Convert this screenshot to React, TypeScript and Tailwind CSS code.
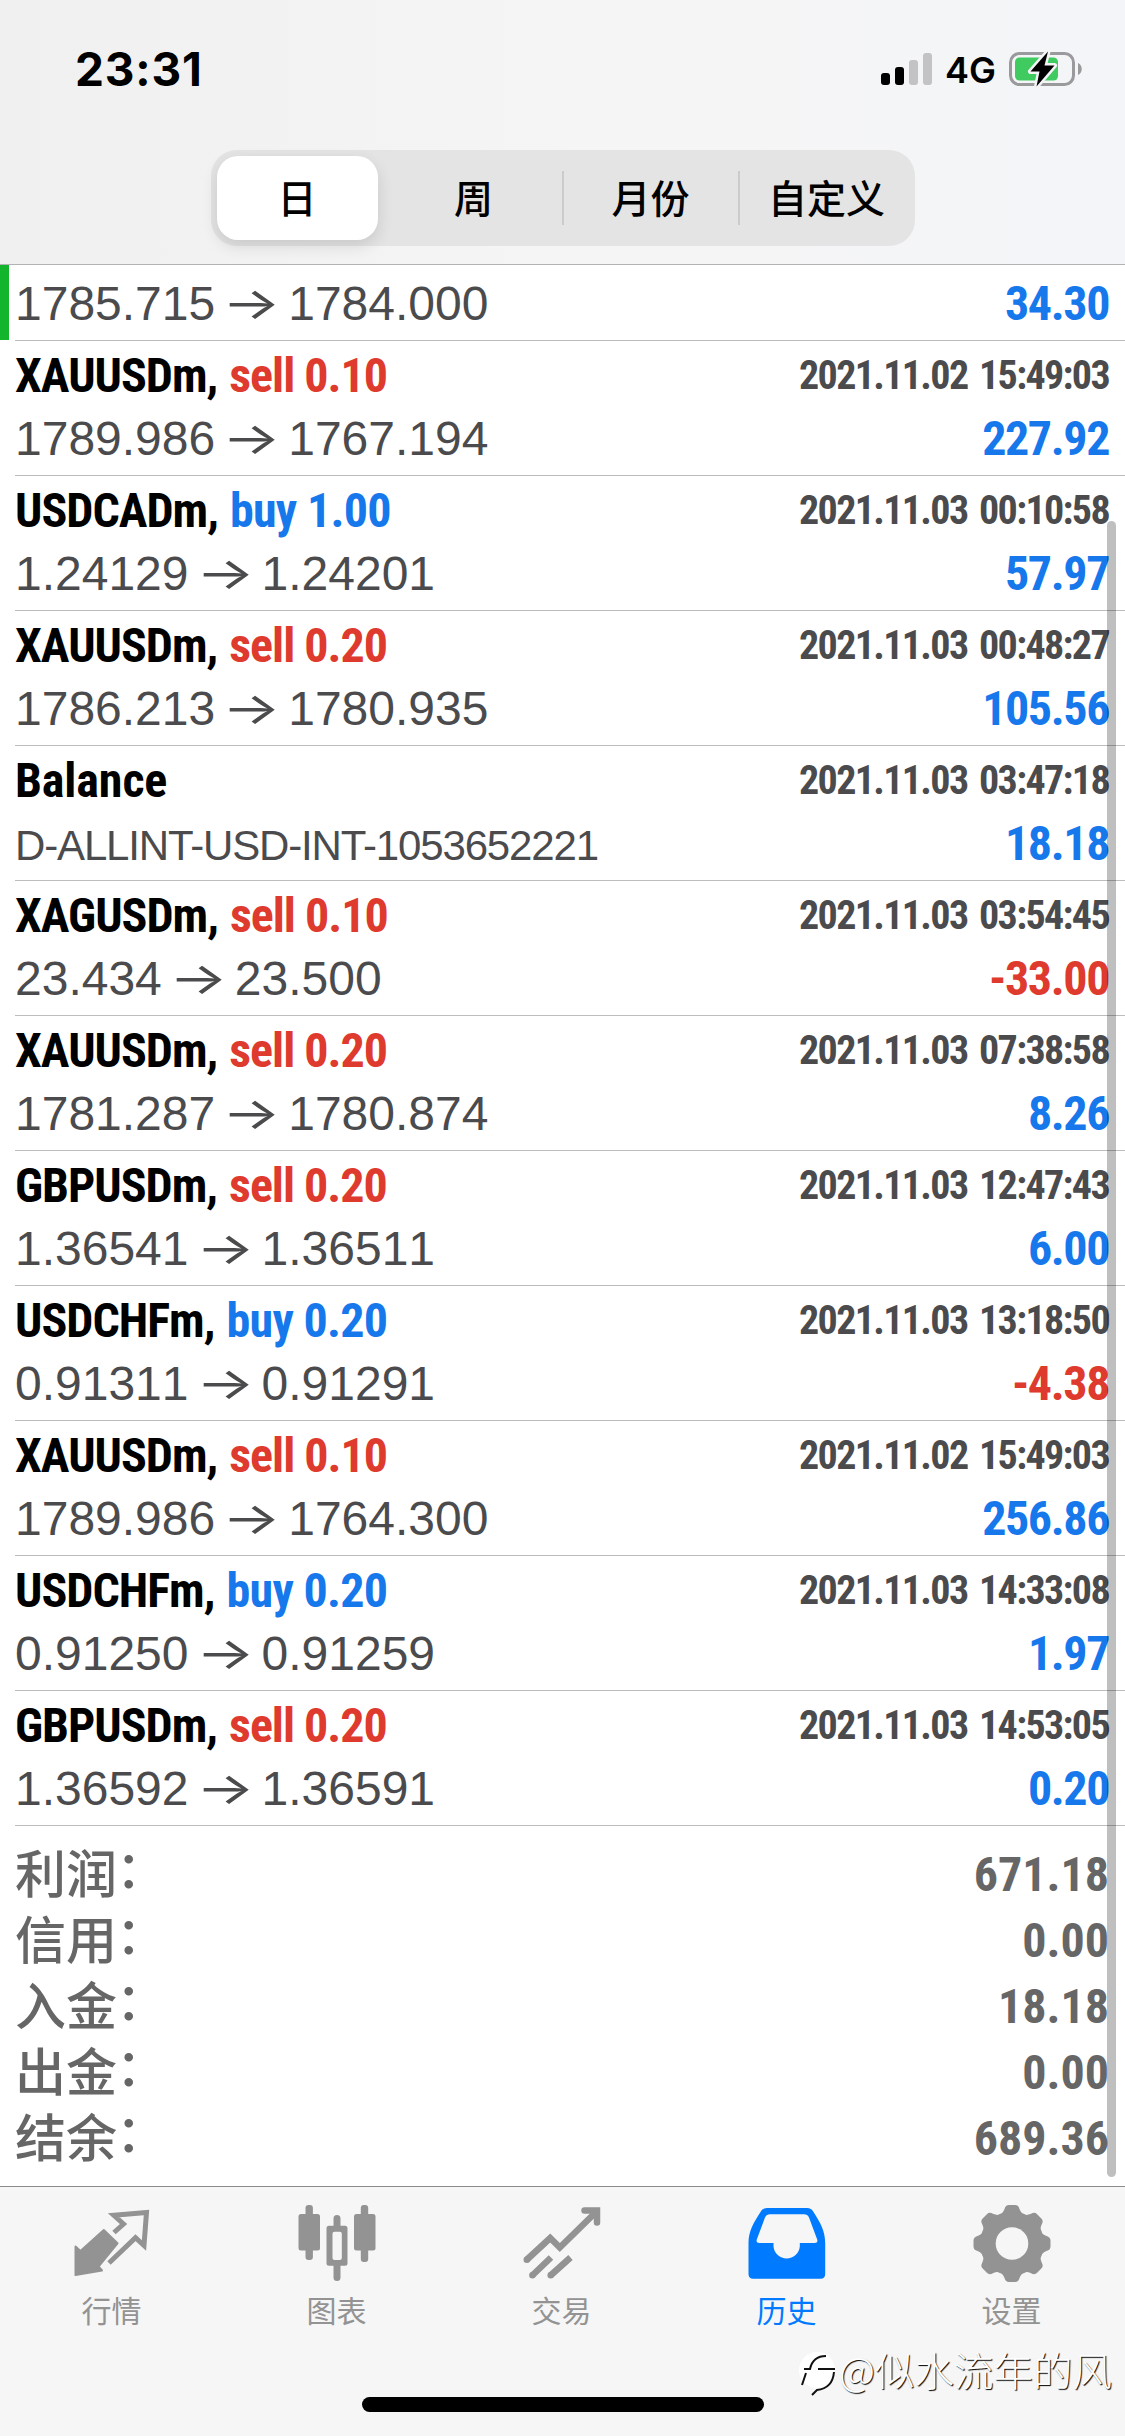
import type { ReactNode } from "react";
import clsx from "clsx";

interface Deal {
  symbol: string;
  side?: "buy" | "sell";
  volume?: string;
  open?: string;
  close?: string;
  comment?: string;
  time: string;
  profit: string;
}

const deals: Deal[] = [
  { symbol: "XAUUSDm", side: "sell", volume: "0.10", open: "1789.986", close: "1767.194", time: "2021.11.02 15:49:03", profit: "227.92" },
  { symbol: "USDCADm", side: "buy", volume: "1.00", open: "1.24129", close: "1.24201", time: "2021.11.03 00:10:58", profit: "57.97" },
  { symbol: "XAUUSDm", side: "sell", volume: "0.20", open: "1786.213", close: "1780.935", time: "2021.11.03 00:48:27", profit: "105.56" },
  { symbol: "Balance", comment: "D-ALLINT-USD-INT-1053652221", time: "2021.11.03 03:47:18", profit: "18.18" },
  { symbol: "XAGUSDm", side: "sell", volume: "0.10", open: "23.434", close: "23.500", time: "2021.11.03 03:54:45", profit: "-33.00" },
  { symbol: "XAUUSDm", side: "sell", volume: "0.20", open: "1781.287", close: "1780.874", time: "2021.11.03 07:38:58", profit: "8.26" },
  { symbol: "GBPUSDm", side: "sell", volume: "0.20", open: "1.36541", close: "1.36511", time: "2021.11.03 12:47:43", profit: "6.00" },
  { symbol: "USDCHFm", side: "buy", volume: "0.20", open: "0.91311", close: "0.91291", time: "2021.11.03 13:18:50", profit: "-4.38" },
  { symbol: "XAUUSDm", side: "sell", volume: "0.10", open: "1789.986", close: "1764.300", time: "2021.11.02 15:49:03", profit: "256.86" },
  { symbol: "USDCHFm", side: "buy", volume: "0.20", open: "0.91250", close: "0.91259", time: "2021.11.03 14:33:08", profit: "1.97" },
  { symbol: "GBPUSDm", side: "sell", volume: "0.20", open: "1.36592", close: "1.36591", time: "2021.11.03 14:53:05", profit: "0.20" },
];

const totals = [
  { label: "利润", value: "671.18" },
  { label: "信用", value: "0.00" },
  { label: "入金", value: "18.18" },
  { label: "出金", value: "0.00" },
  { label: "结余", value: "689.36" },
];

const periods = ["日", "周", "月份", "自定义"];

const condensed = "font-['Roboto_Condensed','Liberation_Sans',sans-serif] font-bold";
const cjk = "font-['Noto_Sans_CJK_SC',sans-serif]";

function StatusBar() {
  return (
    <div className="flex h-[138px] items-center justify-between pl-[75px] pr-[42px]">
      <span className="font-['Inter',sans-serif] text-[46px] font-bold leading-none tracking-[0.8px]">
        23:31
      </span>
      <div className="flex items-center">
        <svg width="52" height="34" viewBox="0 0 52 34">
          <rect x="0" y="21" width="9" height="12" rx="3" fill="#000" />
          <rect x="14" y="15" width="9" height="18" rx="3" fill="#000" />
          <rect x="28" y="8" width="9" height="25" rx="3" fill="#c3c3c5" />
          <rect x="42" y="1" width="9" height="32" rx="3" fill="#c3c3c5" />
        </svg>
        <span className="ml-[12px] w-[63px] pt-[2px] font-['Inter',sans-serif] text-[36px] font-semibold leading-none">
          4G
        </span>
        <svg width="75" height="38" viewBox="0 0 75 38">
          <rect x="2.5" y="3.5" width="63" height="31" rx="9" fill="none" stroke="#9a9a9c" strokeWidth="3" />
          <path d="M70 13c5 2 5 10 0 12z" fill="#9a9a9c" />
          <rect x="7" y="7.5" width="43" height="23" rx="4.5" fill="#3fcb5f" />
          <path
            d="M40 1.5 22.5 21.5H31.5L28.5 36.5 46.5 15.5H36.5Z"
            fill="#000"
            stroke="#f4f4f6"
            strokeWidth="5"
            strokeLinejoin="round"
            paintOrder="stroke"
          />
        </svg>
      </div>
    </div>
  );
}

function PeriodTabs() {
  return (
    <div className={clsx("mx-auto mt-[12px] grid h-[96px] w-[704px] grid-cols-4 items-center rounded-[26px] bg-[#e4e4e5] text-[39px] font-medium text-black", cjk)}>
      {periods.map((period, i) => (
        <div
          key={period}
          className={clsx(
            "flex items-center",
            i === 0 ? "ml-[6px] mr-[9px] h-[84px] rounded-[21px] bg-white shadow-[0_6px_16px_rgba(0,0,0,0.12)]" : "-ml-px mr-px h-[54px]",
            i > 1 && "border-l-2 border-[#cbcbcd]",
          )}
        >
          <span className="flex-1 pb-[3px] text-center leading-none">{period}</span>
        </div>
      ))}
    </div>
  );
}

function Prices({ open, close }: { open?: string; close?: string }) {
  return (
    <span className="flex items-center text-[48px] leading-[57px] text-[#4b4b4d] [font-kerning:none]">
      {open}
      <span className="w-[73px] scale-x-[1.4] text-center font-['Inter',sans-serif] text-[44px] font-normal">→</span>
      {close}
    </span>
  );
}

function Profit({ value }: { value: string }) {
  return (
    <span
      className={clsx(
        "text-[48px] leading-[57px] tracking-[-1.4px]",
        condensed,
        value.startsWith("-") ? "text-[#de3a2e]" : "text-[#1778ec]",
      )}
    >
      {value}
    </span>
  );
}

function DealRow({ deal }: { deal: Deal }) {
  return (
    <div className="ml-[15px] h-[135px] border-b border-[#bdbdbf] pr-4">
      <div className={clsx("flex h-[69px] items-center justify-between", condensed)}>
        <div className="text-[48px] leading-[69px]">
          <span className={clsx("text-black", deal.side ? "tracking-[-1px]" : "tracking-[-0.1px]")}>
            {deal.symbol}
            {deal.side && ","}
          </span>
          {deal.side && (
            <span className={clsx("ml-[12px]", deal.side === "buy" ? "tracking-[-0.7px] text-[#1778ec]" : "tracking-[-1px] text-[#de3a2e]")}>
              {deal.side} {deal.volume}
            </span>
          )}
        </div>
        <span className="text-[40px] leading-[69px] tracking-[-1.65px] text-[#4b4b4d] [word-spacing:4px]">{deal.time}</span>
      </div>
      <div className="flex h-[57px] items-center justify-between">
        {deal.comment ? (
          <span className="pt-[4px] text-[42px] leading-[57px] tracking-[-1.15px] text-[#4b4b4d]">
            {deal.comment}
          </span>
        ) : (
          <Prices open={deal.open} close={deal.close} />
        )}
        <Profit value={deal.profit} />
      </div>
    </div>
  );
}

function TabItem({ label, active, children }: { label: string; active?: boolean; children: ReactNode }) {
  return (
    <div className={clsx("flex flex-1 flex-col items-center", active ? "text-[#007aff]" : "text-[#939393]")}>
      <svg width="78" height="80" viewBox="0 0 78 80" fill="currentColor">
        {children}
      </svg>
      <span className={clsx("mt-[7px] text-[30px] leading-[36px]", cjk)}>{label}</span>
    </div>
  );
}

function TabBar() {
  return (
    <div className="h-[250px] border-t border-[#8b8b8d] bg-[#f6f6f6]">
      <div className="-ml-px mr-px flex pt-[17px]">
        <TabItem label="行情">
          <path
            d="M2.5 42.5 7.5 47 30.8 26 44.5 39.3 25.5 62.5 29 66.5 2.5 71Z"
            stroke="currentColor"
            strokeWidth="2"
            strokeLinejoin="round"
          />
          <path
            d="M41 28.5 50.5 20 40.8 11.3 73.5 8.5 71 41.5 62.5 33.7 36 59"
            fill="none"
            stroke="currentColor"
            strokeWidth="5"
          />
        </TabItem>
        <TabItem label="图表">
          <rect x="0.5" y="10" width="21.5" height="36.5" rx="2.5" />
          <rect x="7.5" y="1" width="7.4" height="55" rx="3" />
          <path fillRule="evenodd" d="M31 21.7H47a2.5 2.5 0 0 1 2.5 2.5V59.2a2.5 2.5 0 0 1-2.5 2.5H31a2.5 2.5 0 0 1-2.5-2.5V24.2a2.5 2.5 0 0 1 2.5-2.5ZM36.5 27.7a2 2 0 0 0-2 2V54a2 2 0 0 0 2 2h5.3a2 2 0 0 0 2-2V29.7a2 2 0 0 0-2-2Z" />
          <path d="M35.5 23V14.5a3.5 3.5 0 0 1 7 0V23ZM35.5 60V73.5a3.5 3.5 0 0 0 7 0V60Z" />
          <rect x="56" y="10" width="21.5" height="36.5" rx="2.5" />
          <rect x="62.8" y="1" width="7.4" height="57" rx="3" />
        </TabItem>
        <TabItem label="交易">
          <g fill="none" stroke="currentColor" strokeWidth="6.5">
            <path d="M3.5 56 27.2 34 36.8 43.5 72 9" />
            <path d="M61.5 6.5H74V18.5" strokeLinecap="round" />
            <path d="M9.2 71.5 28 53.5M27.5 71.5 47.5 53.5" />
          </g>
          <circle cx="3.8" cy="55.8" r="3.25" />
          <circle cx="9.4" cy="71.3" r="3.25" />
          <circle cx="27.7" cy="71.3" r="3.25" />
        </TabItem>
        <TabItem label="历史" active>
          <path
            fillRule="evenodd"
            d="M19 4H59Q63.5 4 65.5 8C72 18 77.2 27 77.2 39V70Q77.2 74.7 72.5 74.7H5.2Q.5 74.7 .5 70V39C.5 27 6 18 12.5 8Q14.5 4 19 4ZM22 10.3Q18.5 10.3 17 13.5L8.8 35.5Q7.8 39 11.5 39H25.5V42.5A13.2 13.2 0 0 0 51.8 42.5V39H66.5Q70.2 39 69.2 35.5L61 13.5Q59.5 10.3 56 10.3Z"
          />
        </TabItem>
        <TabItem label="设置">
          <circle cx="39" cy="39.5" r="32" />
          {[0, 45, 90, 135, 180, 225, 270, 315].map((deg) => (
            <path
              key={deg}
              transform={`rotate(${deg} 39 39.5)`}
              d="M25 12Q30 9.5 31.5 5Q32.5 1 36 1H42Q45.5 1 46.5 5Q48 9.5 53 12Z"
            />
          ))}
          <circle cx="39" cy="39.5" r="16.3" fill="#f6f6f6" />
        </TabItem>
      </div>
    </div>
  );
}

function Watermark() {
  return (
    <div className="absolute left-[797px] top-[2341px] flex items-center">
      <svg width="42" height="56" viewBox="0 -2 42 56">
        <circle cx="20" cy="27" r="18" fill="#fff" />
        <path d="M5 42 9 30M7 26H13C15 17 20 13 29 13M21 26H38M37 29C36 40 30 46 20 47L15 52" fill="none" stroke="#111" strokeWidth="2" />
      </svg>
      <span className={clsx("whitespace-nowrap text-[39.5px] font-light leading-[48px] text-white [text-shadow:1px_1px_1px_#000]", cjk)}>
        @似水流年的风
      </span>
    </div>
  );
}

export default function App() {
  return (
    <div className="relative h-[2436px] w-[1125px] overflow-hidden bg-white font-['Liberation_Sans','Noto_Sans_CJK_SC',sans-serif] text-black">
      <header className="h-[265px] border-b border-[#b2b2b4] bg-gradient-to-r from-[#f0f0f0] via-[#f5f5f5] to-[#f4f5f8]">
        <StatusBar />
        <PeriodTabs />
      </header>

      <main className="h-[1921px]">
        <div className="flex h-[76px]">
          <div className="h-[75px] w-[9px] bg-[#12b52b]" />
          <div className="ml-[6px] flex flex-1 items-start justify-between border-b border-[#bdbdbf] pr-4 pt-[10px]">
            <Prices open="1785.715" close="1784.000" />
            <Profit value="34.30" />
          </div>
        </div>
        {deals.map((deal, i) => (
          <DealRow key={i} deal={deal} />
        ))}
        <div className="pl-[15px] pr-4 pt-[14px] text-[#666]">
          {totals.map((total) => (
            <div key={total.label} className="flex h-[66px] items-center justify-between">
              <span className={clsx("pb-[4px] text-[51px] font-medium leading-[62px]", cjk)}>
                {total.label}
                <span className="relative -left-px -top-[5px]">：</span>
              </span>
              <span className={clsx("pt-[3px] text-[48px] leading-[63px]", condensed)}>{total.value}</span>
            </div>
          ))}
        </div>
      </main>

      <TabBar />

      <div className="absolute left-[1107px] top-[521px] h-[1656px] w-[9px] rounded-full bg-black/25" />
      <div className="absolute left-[362px] top-[2397px] h-[15px] w-[402px] rounded-full bg-black" />
      <Watermark />
    </div>
  );
}
